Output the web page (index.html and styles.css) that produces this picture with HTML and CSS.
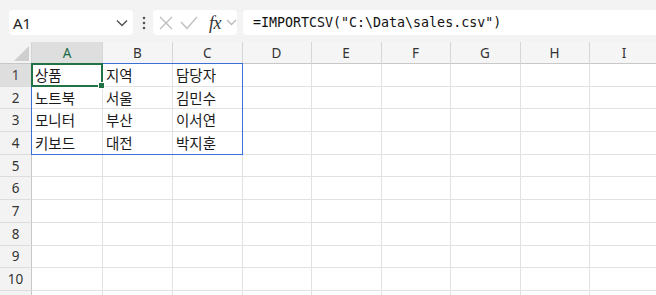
FILE: index.html
```html
<!DOCTYPE html>
<html lang="ko">
<head>
<meta charset="utf-8">
<link rel="stylesheet" href="styles.css">
</head>
<body>
<div class="app">
  <div class="toolbar">
    <div class="namebox">
      <span class="ref">A1</span>
      <svg class="chev" width="12" height="8" viewBox="0 0 12 8"><polyline points="1,1.5 6,6.5 11,1.5" fill="none" stroke="#555" stroke-width="1.5"/></svg>
    </div>
    <svg class="dots" width="6" height="14" viewBox="0 0 6 14"><circle cx="3" cy="2" r="1.3" fill="#555"/><circle cx="3" cy="7" r="1.3" fill="#555"/><circle cx="3" cy="12" r="1.3" fill="#555"/></svg>
    <div class="fxbox">
      <svg class="icon-x" width="14" height="14" viewBox="0 0 14 14"><path d="M1 1 L13 13 M13 1 L1 13" stroke="#bdbdbd" stroke-width="1.3" fill="none"/></svg>
      <svg class="icon-check" width="18" height="14" viewBox="0 0 18 14"><polyline points="1,6 7,12.5 17,1" fill="none" stroke="#bdbdbd" stroke-width="1.3"/></svg>
      <span class="fx">fx</span>
      <svg class="chev2" width="11" height="7" viewBox="0 0 11 7"><polyline points="1,1 5.5,5.5 10,1" fill="none" stroke="#bbb" stroke-width="1.4"/></svg>
    </div>
    <div class="formula">=IMPORTCSV("C:\Data\sales.csv")</div>
  </div>

  <div class="sheet">
    <div class="grid">
      <div class="corner"><span class="tri"></span></div>
      <div class="ch sel">A</div><div class="ch">B</div><div class="ch">C</div><div class="ch">D</div><div class="ch">E</div><div class="ch">F</div><div class="ch">G</div><div class="ch">H</div><div class="ch">I</div>

      <div class="rh sel">1</div><div class="c">상품</div><div class="c">지역</div><div class="c">담당자</div><div class="c"></div><div class="c"></div><div class="c"></div><div class="c"></div><div class="c"></div><div class="c"></div>
      <div class="rh">2</div><div class="c">노트북</div><div class="c">서울</div><div class="c">김민수</div><div class="c"></div><div class="c"></div><div class="c"></div><div class="c"></div><div class="c"></div><div class="c"></div>
      <div class="rh">3</div><div class="c">모니터</div><div class="c">부산</div><div class="c">이서연</div><div class="c"></div><div class="c"></div><div class="c"></div><div class="c"></div><div class="c"></div><div class="c"></div>
      <div class="rh">4</div><div class="c">키보드</div><div class="c">대전</div><div class="c">박지훈</div><div class="c"></div><div class="c"></div><div class="c"></div><div class="c"></div><div class="c"></div><div class="c"></div>
      <div class="rh">5</div><div class="c"></div><div class="c"></div><div class="c"></div><div class="c"></div><div class="c"></div><div class="c"></div><div class="c"></div><div class="c"></div><div class="c"></div>
      <div class="rh">6</div><div class="c"></div><div class="c"></div><div class="c"></div><div class="c"></div><div class="c"></div><div class="c"></div><div class="c"></div><div class="c"></div><div class="c"></div>
      <div class="rh">7</div><div class="c"></div><div class="c"></div><div class="c"></div><div class="c"></div><div class="c"></div><div class="c"></div><div class="c"></div><div class="c"></div><div class="c"></div>
      <div class="rh">8</div><div class="c"></div><div class="c"></div><div class="c"></div><div class="c"></div><div class="c"></div><div class="c"></div><div class="c"></div><div class="c"></div><div class="c"></div>
      <div class="rh">9</div><div class="c"></div><div class="c"></div><div class="c"></div><div class="c"></div><div class="c"></div><div class="c"></div><div class="c"></div><div class="c"></div><div class="c"></div>
      <div class="rh">10</div><div class="c"></div><div class="c"></div><div class="c"></div><div class="c"></div><div class="c"></div><div class="c"></div><div class="c"></div><div class="c"></div><div class="c"></div>
      <div class="rh"></div><div class="c"></div><div class="c"></div><div class="c"></div><div class="c"></div><div class="c"></div><div class="c"></div><div class="c"></div><div class="c"></div><div class="c"></div>
    </div>
    <div class="spill"></div>
    <div class="active"><span class="handle"></span></div>
  </div>
</div>
</body>
</html>
```

FILE: styles.css
```css
html, body {
  margin: 0;
  padding: 0;
  background: #ffffff;
}

.app {
  width: 656px;
  height: 295px;
  overflow: hidden;
  background: #f3f3f3;
}

.toolbar {
  display: flex;
  align-items: center;
  height: 25px;
  padding: 10px 0 7px 9px;
  border-top: 2px solid #fafafa;
  margin-top: -2px;
}

.namebox {
  width: 124px;
  height: 25px;
  box-sizing: border-box;
  background: #ffffff;
  border-radius: 4px;
  display: flex;
  align-items: center;
  justify-content: space-between;
  padding: 0 5px 0 4px;
}

.ref {
  font-family: "Noto Sans", sans-serif;
  font-size: 15px;
  color: #222;
}

.chev {
  display: block;
}

.dots {
  display: block;
  margin: 0 6px 0 8px;
}

.fxbox {
  width: 84px;
  height: 25px;
  box-sizing: border-box;
  background: #ffffff;
  border-radius: 4px;
  display: flex;
  align-items: center;
  padding: 0 0 0 6px;
}

.icon-x {
  display: block;
  margin-right: 7px;
}

.icon-check {
  display: block;
  margin-right: 11px;
}

.fx {
  font-family: "Liberation Serif", serif;
  font-style: italic;
  font-size: 18px;
  color: #333;
  line-height: 1;
  margin-right: 5px;
  letter-spacing: -0.5px;
}

.chev2 {
  display: block;
}

.formula {
  flex: 1;
  height: 25px;
  box-sizing: border-box;
  margin-left: 6px;
  margin-right: -20px;
  background: #ffffff;
  border-radius: 4px;
  padding: 0 0 0 10px;
  font-family: "DejaVu Sans Mono", "Liberation Mono", monospace;
  font-size: 13.3px;
  line-height: 25px;
  color: #111;
  white-space: nowrap;
}

.sheet {
  position: relative;
}

.grid {
  display: grid;
  grid-template-columns: 32px 71px 70px 69.5px 69px 70px 69px 70px 69px 70px;
  grid-template-rows: 22px repeat(11, 22.7px);
  background: #ffffff;
}

.corner {
  position: relative;
  background: #f3f3f3;
  border-right: 1px solid #d4d4d4;
  border-bottom: 1px solid #c8c8c8;
  box-sizing: border-box;
}

.tri {
  position: absolute;
  right: 2px;
  bottom: 2px;
  width: 0;
  height: 0;
  border-left: 15px solid transparent;
  border-bottom: 15px solid #cfcfcf;
}

.ch {
  background: #f5f5f5;
  border-right: 1px solid #d6d6d6;
  border-bottom: 1px solid #c8c8c8;
  box-sizing: border-box;
  font-family: "Noto Sans", sans-serif;
  font-size: 13.5px;
  color: #333;
  display: flex;
  align-items: center;
  justify-content: center;
}

.ch.sel {
  background: #dedede;
  color: #1d6a46;
}

.rh {
  background: #f3f3f3;
  border-right: 1px solid #c8c8c8;
  border-bottom: 1px solid #dcdcdc;
  box-sizing: border-box;
  font-family: "Noto Sans", sans-serif;
  font-size: 13.5px;
  color: #333;
  display: flex;
  align-items: center;
  justify-content: center;
}

.rh.sel {
  background: #dedede;
  color: #444;
}

.c {
  border-right: 1px solid #e2e2e2;
  border-bottom: 1px solid #e2e2e2;
  box-sizing: border-box;
  font-family: "Noto Sans CJK KR", sans-serif;
  font-size: 14.5px;
  color: #1a1a1a;
  padding: 0 0 0 3px;
  line-height: 22px;
  white-space: nowrap;
  overflow: hidden;
}

.spill {
  position: absolute;
  left: 31px;
  top: 21px;
  width: 212px;
  height: 92px;
  border: 1px solid #3c6fd6;
  box-sizing: border-box;
  pointer-events: none;
}

.active {
  position: absolute;
  left: 31px;
  top: 21px;
  width: 72px;
  height: 24px;
  border: 2px solid #217346;
  box-sizing: border-box;
}

.handle {
  position: absolute;
  right: -4px;
  bottom: -4px;
  width: 5px;
  height: 5px;
  background: #217346;
  border: 1px solid #ffffff;
}
```
